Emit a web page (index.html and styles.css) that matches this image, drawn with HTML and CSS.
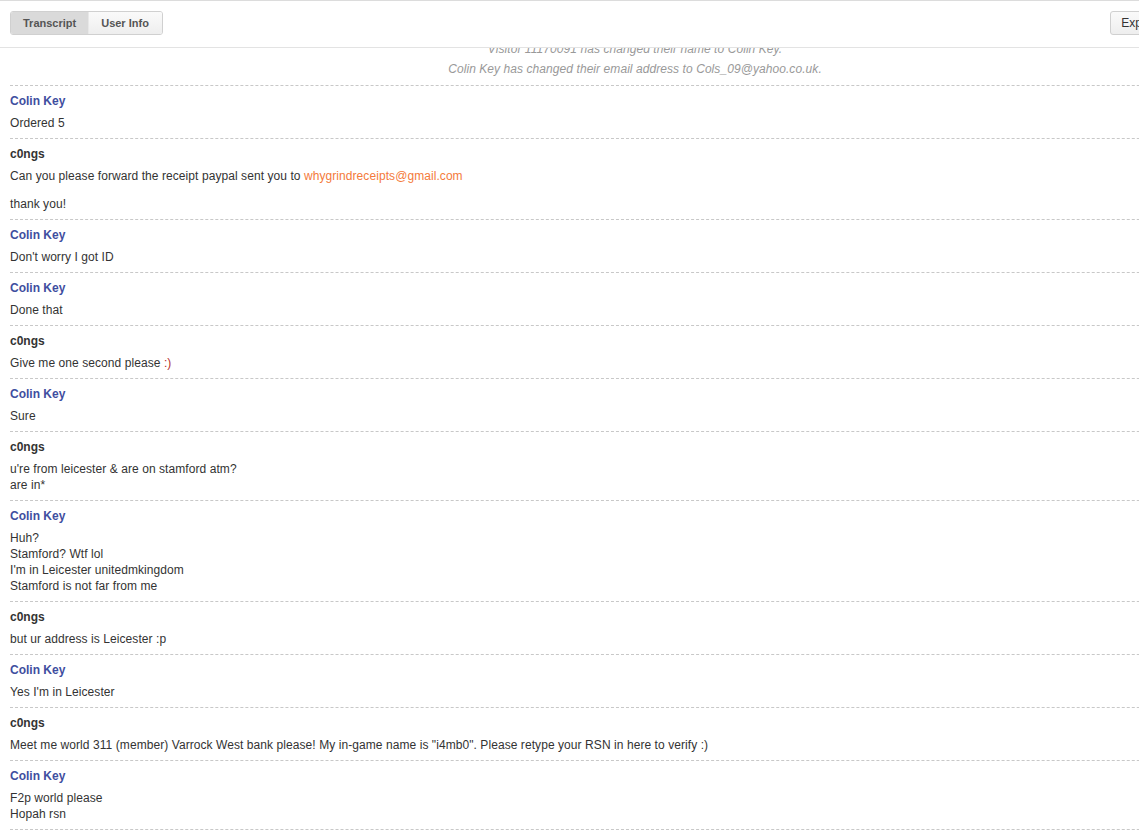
FILE: index.html
```html
<!DOCTYPE html>
<html>
<head>
<meta charset="utf-8">
<link rel="stylesheet" href="styles.css">
</head>
<body>
<div class="page">
  <header class="toolbar">
    <div class="tabs">
      <button class="tab active">Transcript</button>
      <button class="tab">User Info</button>
    </div>
    <button class="btn">Export</button>
  </header>
  <main class="viewport">
    <div class="transcript">
      <div class="system">
        <p class="sys-line">Visitor 11170091 has changed their name to Colin Key.</p>
        <p class="sys-line">Colin Key has changed their email address to Cols_09@yahoo.co.uk.</p>
      </div>
      <div class="msg visitor"><div class="name">Colin Key</div><div class="body"><p>Ordered 5</p></div></div>
      <div class="msg agent"><div class="name">c0ngs</div><div class="body"><p>Can you please forward the receipt paypal sent you to <a class="link">whygrindreceipts@gmail.com</a></p><p>thank you!</p></div></div>
      <div class="msg visitor"><div class="name">Colin Key</div><div class="body"><p>Don't worry I got ID</p></div></div>
      <div class="msg visitor"><div class="name">Colin Key</div><div class="body"><p>Done that</p></div></div>
      <div class="msg agent"><div class="name">c0ngs</div><div class="body"><p>Give me one second please <span class="smile">:)</span></p></div></div>
      <div class="msg visitor"><div class="name">Colin Key</div><div class="body"><p>Sure</p></div></div>
      <div class="msg agent"><div class="name">c0ngs</div><div class="body"><p>u're from leicester &amp; are on stamford atm?<br>are in*</p></div></div>
      <div class="msg visitor"><div class="name">Colin Key</div><div class="body"><p>Huh?<br>Stamford? Wtf lol<br>I'm in Leicester unitedmkingdom<br>Stamford is not far from me</p></div></div>
      <div class="msg agent"><div class="name">c0ngs</div><div class="body"><p>but ur address is Leicester :p</p></div></div>
      <div class="msg visitor"><div class="name">Colin Key</div><div class="body"><p>Yes I'm in Leicester</p></div></div>
      <div class="msg agent"><div class="name">c0ngs</div><div class="body"><p>Meet me world 311 (member) Varrock West bank please! My in-game name is "i4mb0". Please retype your RSN in here to verify :)</p></div></div>
      <div class="msg visitor"><div class="name">Colin Key</div><div class="body"><p>F2p world please<br>Hopah rsn</p></div></div>
    </div>
  </main>
</div>
</body>
</html>
```

FILE: styles.css
```css
html, body {
  margin: 0;
  padding: 0;
  overflow: hidden;
  background: #fff;
}
body {
  font-family: "Liberation Sans", Arial, sans-serif;
  font-size: 12px;
  color: #333;
}
.page {
  width: 1270px;
  height: 839px;
  display: flex;
  flex-direction: column;
}
.toolbar {
  flex: 0 0 auto;
  height: 46px;
  border-top: 1px solid #dcdcdc;
  border-bottom: 1px solid #e3e3e3;
  box-sizing: content-box;
  display: flex;
  align-items: flex-start;
  padding: 0 10px;
}
.tabs {
  display: flex;
  margin-top: 10px;
  border: 1px solid #d0d0d0;
  border-radius: 3px;
  overflow: hidden;
}
.tab, .btn {
  font-family: "Liberation Sans", Arial, sans-serif;
  font-size: 11px;
  font-weight: bold;
  color: #555;
  height: 22px;
  margin: 0;
  border: 0;
  padding: 0 12px;
  background: linear-gradient(#fafafa, #eeeeee);
  cursor: pointer;
}
.tab + .tab {
  border-left: 1px solid #e8e8e8;
  padding: 0 13px 0 12px;
}
.tab.active {
  background: #dadada;
  color: #555;
  padding: 0 12px 0 12px;
}
.btn {
  margin-top: 10px;
  margin-left: auto;
  margin-right: 92px;
  border: 1px solid #d0d0d0;
  border-radius: 3px;
  font-size: 12px;
  font-weight: normal;
  color: #333;
  height: 24px;
  padding: 0 11px 0 10px;
}
.viewport {
  flex: 1 1 auto;
  overflow: hidden;
  padding: 0 0 0 10px;
}
.transcript {
  margin-top: -9px;
  letter-spacing: 0.07px;
}
.system {
  text-align: center;
  font-style: italic;
  color: #999;
  padding-right: 10px;
  padding-bottom: 6px;
}
.sys-line {
  margin: 0;
  line-height: 20px;
}
.msg {
  border-top: 1px dashed #c8c8c8;
  padding: 7px 0 7px;
}
.msg:last-child {
  border-bottom: 1px dashed #c8c8c8;
}
.name {
  font-weight: bold;
  line-height: 16px;
  color: #333;
  letter-spacing: 0;
}
.visitor .name {
  color: #3f4ea0;
}
.body {
  margin-top: 6px;
  line-height: 16px;
}
.body p {
  margin: 0;
}
.body p + p {
  margin-top: 12px;
}
.link {
  color: #f47a3a;
}
.smile {
  color: #b5302a;
}
```
